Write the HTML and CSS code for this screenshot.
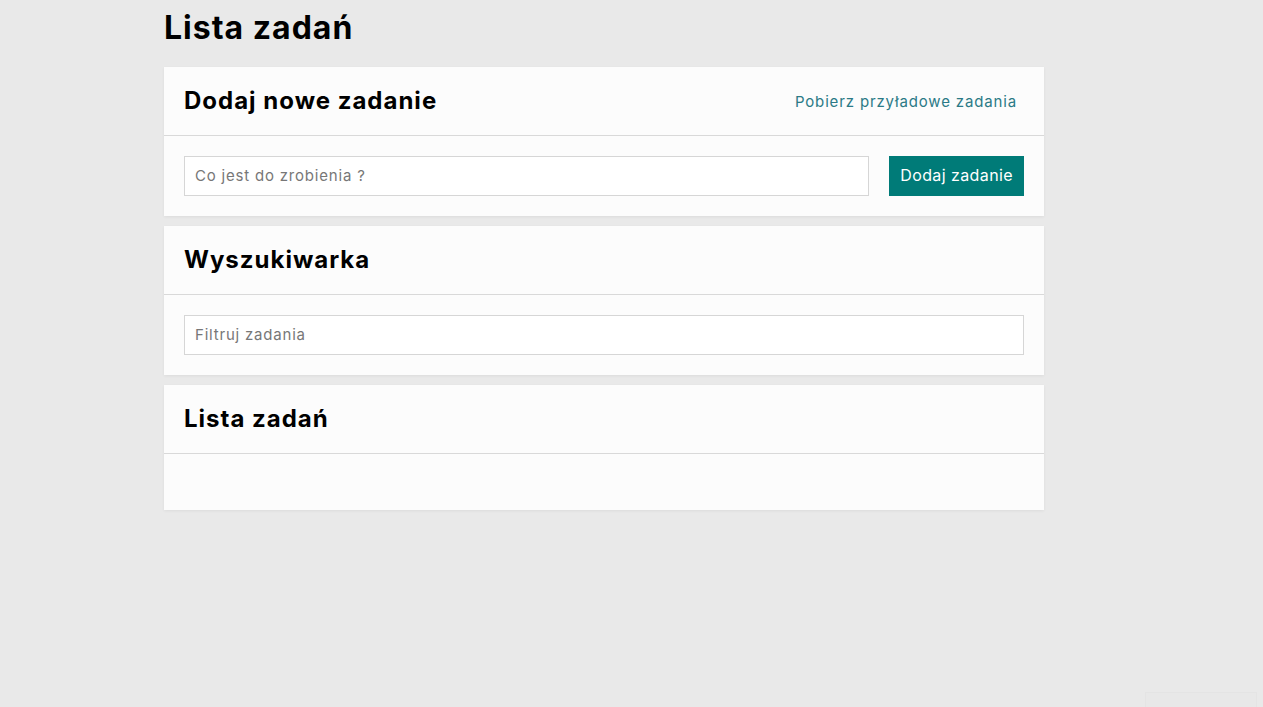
FILE: index.html
```html
<!DOCTYPE html>
<html lang="pl">
<head>
<meta charset="utf-8">
<title>Lista zadań</title>
<link rel="stylesheet" href="styles.css">
</head>
<body>
<div class="container">
  <h1 class="page-title">Lista zadań</h1>
  <section class="card">
    <div class="card-header">
      <h2 class="card-title">Dodaj nowe zadanie</h2>
      <a class="card-link" href="#">Pobierz przyładowe zadania</a>
    </div>
    <div class="card-body add-row">
      <input class="field" type="text" placeholder="Co jest do zrobienia ?">
      <button class="btn" type="button">Dodaj zadanie</button>
    </div>
  </section>
  <section class="card">
    <div class="card-header">
      <h2 class="card-title">Wyszukiwarka</h2>
    </div>
    <div class="card-body">
      <input class="field full" type="text" placeholder="Filtruj zadania">
    </div>
  </section>
  <section class="card">
    <div class="card-header">
      <h2 class="card-title">Lista zadań</h2>
    </div>
    <div class="card-body list-body">
      <ul class="task-list"></ul>
    </div>
  </section>
</div>
<div class="corner-box"></div>
</body>
</html>
```

FILE: styles.css
```css
html, body {
  margin: 0;
  padding: 0;
  background: #e9e9e9;
  height: 100%;
}
body {
  font-family: Inter, "Noto Sans", "DejaVu Sans", sans-serif;
  color: #000;
}
.container {
  width: 880px;
  margin: 0 0 0 164px;
  display: flex;
  flex-direction: column;
  gap: 10px;
}
.page-title {
  font-size: 32px;
  font-weight: 700;
  letter-spacing: 1px;
  margin: 0;
  padding-top: 8px;
  line-height: 40px;
  height: 61px;
  box-sizing: border-box;
  margin-bottom: -4px;
}
.card {
  background: #fcfcfc;
  box-shadow: 0 1px 3px rgba(0,0,0,0.06);
}
.card-header {
  height: 68px;
  display: flex;
  align-items: center;
  justify-content: space-between;
  padding: 0 27px 0 20px;
  border-bottom: 1px solid #d9d9d9;
}
.card-title {
  margin: 0;
  font-size: 24px;
  font-weight: 700;
  letter-spacing: 1px;
  margin-top: -2px;
}
.card-link {
  color: #2b7a86;
  text-decoration: none;
  font-size: 15px;
  letter-spacing: 0.85px;
}
.card-body {
  padding: 20px;
}
.add-row {
  display: flex;
  gap: 20px;
}
.field {
  height: 40px;
  box-sizing: border-box;
  border: 1px solid #d6d6d6;
  background: #fff;
  padding: 0 10px 2px;
  font-family: inherit;
  font-size: 15px;
  letter-spacing: 0.8px;
  color: #333;
  flex: 1;
  outline: none;
}
.field::placeholder {
  color: #777;
}
.full {
  width: 100%;
}
.btn {
  height: 40px;
  background: #007b78;
  color: #fff;
  border: none;
  padding: 0 11px 2px;
  font-family: inherit;
  font-size: 16px;
  letter-spacing: 0.4px;
}
.list-body {
  padding: 0;
  height: 56px;
}
.task-list {
  margin: 0;
  padding: 0;
  list-style: none;
}
.corner-box {
  position: fixed;
  right: 6px;
  bottom: 0;
  width: 110px;
  height: 14px;
  border: 1px solid #e4e4e4;
  border-bottom: none;
  background: #e8e8e8;
}
```
